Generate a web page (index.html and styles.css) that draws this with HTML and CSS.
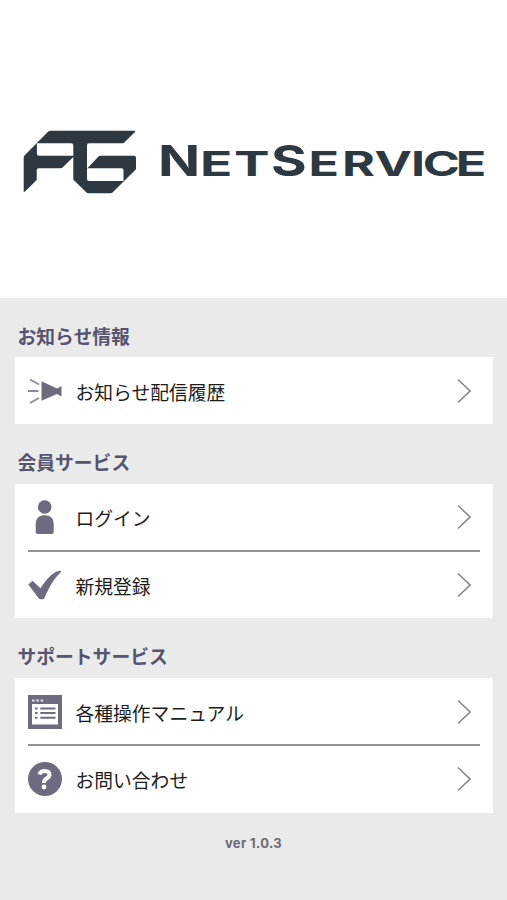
FILE: index.html
```html
<!DOCTYPE html>
<html lang="ja">
<head>
<meta charset="utf-8">
<title>NetService</title>
<link rel="stylesheet" href="styles.css">
</head>
<body>
<header class="hero">
  <svg class="brand" viewBox="0 0 507 297" role="img">
    <path class="mark" fill-rule="evenodd" d="M50.3 130.7H134.5Q136 130.7 135 132L123.500 143.300H89Q87 143.300 87 145.300V168.800L98.500 156.500Q99.300 155.700 100.500 155.700H134Q136 155.700 136 157.700V169.300L112.500 192.500Q111.700 193.300 110.500 193.300H88.500Q87.300 193.300 86.500 192.500L74.200 180.600Q73.300 179.800 73.300 178.500V157L62.500 167.500Q61.700 168.300 60.500 168.300H38.700Q36.700 168.300 36.700 170.300V180L25 191.500Q23.700 192.600 23.700 191V157.500Q23.700 156.300 24.500 155.500L48 131.700Q49 130.700 50.300 130.700ZM36.900 143.600V153.700Q36.900 155.700 38.900 155.700H73.300V145.300Q73.300 143.300 71.300 143.300H37.200ZM87 168.500V179Q87 181 89 181H123.500V170.300Q123.500 168.300 121.500 168.300H87Z"/>
    <g class="wordmark">
      <text class="cap" transform="translate(158 176.3) scale(1.3 1)">N</text>
      <text class="small" transform="translate(200 176.3) scale(1.55 1)" x="0 22">ET</text>
      <text class="cap" transform="translate(271 176.3) scale(1.28 1)">S</text>
      <text class="small" transform="translate(308.500 176.3) scale(1.46 1)" x="0 23 45.200 70.300 78.300 100.800">ERVICE</text>
    </g>
  </svg>
</header>
<main>
  <section>
    <h2>お知らせ情報</h2>
    <div class="card">
      <a class="row">
        <svg class="icon" viewBox="0 0 34 34"><path class="fill" d="M13.500 7.300L29 14.500L32.500 12.500H33.500V22H32.500L29 20L13.500 26.700Z"/><path class="ray" d="M2 5.500L11 10.500M0 17H10.500M2 29L11 24"/></svg>
        <span>お知らせ配信履歴</span>
        <svg class="chevron" viewBox="0 0 14 26"><path d="M1 1.500L13 13L1 24.500"/></svg>
      </a>
    </div>
  </section>
  <section>
    <h2>会員サービス</h2>
    <div class="card">
      <a class="row">
        <svg class="icon" viewBox="0 0 34 34"><circle class="fill" cx="16.700" cy="7" r="6.800"/><path class="fill" d="M7.700 24Q7.700 15.300 16.700 15.300T25.700 24V32Q25.700 34 23.700 34H9.700Q7.700 34 7.700 32Z"/></svg>
        <span>ログイン</span>
        <svg class="chevron" viewBox="0 0 14 26"><path d="M1 1.500L13 13L1 24.500"/></svg>
      </a>
      <a class="row">
        <svg class="icon" viewBox="0 0 34 34"><path class="fill" d="M.3 16.500L4.500 12.800L12.500 20.200C18 12 24 4 31.500 2.700Q34 2.500 32.500 4.500C25 11.500 20.500 21 16.500 30Q15.900 31.300 14.700 31.300H12.500Q11.300 31.300 10.500 30Z"/></svg>
        <span>新規登録</span>
        <svg class="chevron" viewBox="0 0 14 26"><path d="M1 1.500L13 13L1 24.500"/></svg>
      </a>
    </div>
  </section>
  <section>
    <h2>サポートサービス</h2>
    <div class="card">
      <a class="row">
        <svg class="icon" viewBox="0 0 34 34"><path class="fill" fill-rule="evenodd" d="M0 0H34V34H0ZM4 9V29.500H30V9Z"/><path class="dots" d="M4 5.500H6.500M8.300 5.500H10.800M12.700 5.500H15.200"/><path class="list" d="M7 13.500H9.500M7 18H9.500M7 22.800H9.500M12.300 13.500H27.500M12.300 18H27.500M12.300 22.800H27.500"/></svg>
        <span>各種操作マニュアル</span>
        <svg class="chevron" viewBox="0 0 14 26"><path d="M1 1.500L13 13L1 24.500"/></svg>
      </a>
      <a class="row">
        <svg class="icon" viewBox="0 0 34 34"><circle class="fill" cx="17" cy="17" r="17"/><path class="question" d="M11.500 12.500Q12.500 8.900 16.700 8.900Q21.500 9 21.500 12.700Q21.500 14.800 18.800 16.300Q16 18 16 21"/><circle class="dot" cx="16" cy="25" r="2.400"/></svg>
        <span>お問い合わせ</span>
        <svg class="chevron" viewBox="0 0 14 26"><path d="M1 1.500L13 13L1 24.500"/></svg>
      </a>
    </div>
  </section>
</main>
<footer>ver 1.0.3</footer>
</body>
</html>
```
FILE: styles.css
```css
* { box-sizing: border-box; }
body {
  margin: 0;
  min-height: 900px;
  background: #eaeaea;
  color: #1c1c1c;
  font-family: "Noto Sans CJK JP", sans-serif;
}
.hero { height: 297.5px; background: #fff; }
.brand { display: block; width: 507px; height: 297px; }
.mark, .wordmark { fill: #2d3840; }
.wordmark { font-family: Inter, sans-serif; font-weight: 700; }
.cap { font-size: 42.6px; }
.small { font-size: 34.4px; }
section { padding: 0 14px 0 14.5px; }
h2 {
  height: 59.4px;
  margin: 0;
  padding: 17px 0 0 3px;
  color: #56546f;
  font-size: 18.8px;
  font-weight: 700;
  line-height: 41px;
}
.card { background: #fff; padding: 0 13.5px; }
.row {
  display: flex;
  align-items: center;
  height: 67.4px;
  font-size: 18.8px;
}
.row + .row { position: relative; }
.row + .row::before {
  content: "";
  position: absolute;
  inset: -1.5px 0 auto;
  height: 2px;
  background: #929196;
}
.row span { flex: 1; padding-top: 1px; }
.icon { width: 34px; height: 34px; margin-right: 13.5px; }
.fill { fill: #6d6b80; }
.ray, .list, .question, .dots { fill: none; stroke: #6d6b80; stroke-width: 1.8; }
.ray { stroke: #8b8a98; }
.list { stroke-width: 2; }
.dots { stroke: #e4e4ea; stroke-width: 2; }
.question { stroke: #fff; stroke-width: 4; }
.dot { fill: #fff; }
.chevron { width: 14px; height: 26px; margin-right: 8.5px; }
.chevron path { fill: none; stroke: #88878d; stroke-width: 1.6; }
footer {
  padding-top: 20px;
  color: #6a6978;
  font: 700 13px/20px Inter, sans-serif;
  letter-spacing: .35px;
  text-align: center;
}
```
